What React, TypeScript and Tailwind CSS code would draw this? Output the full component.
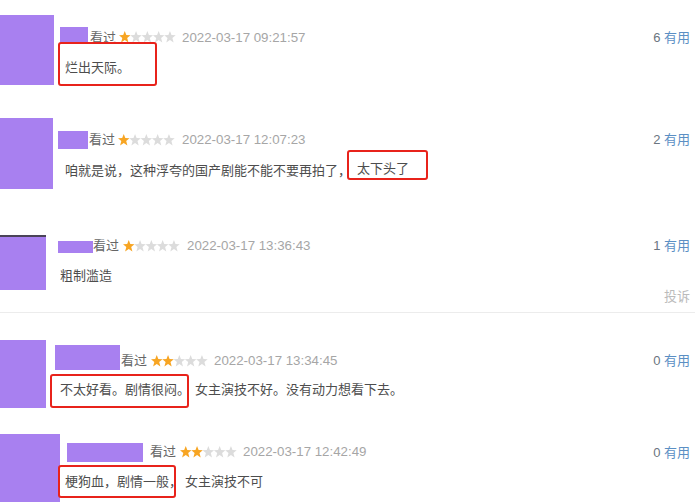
import React from "react";

const PURPLE = "bg-[#a880f0]";

function Stars({ n }: { n: number }) {
  const pts = "5.75,0 7.3,4.1 11.5,4.3 8.2,7 9.4,11.6 5.75,9.1 2.1,11.6 3.3,7 0,4.3 4.2,4.1";
  return (
    <svg width="57" height="12" viewBox="0 0 57 12" className="shrink-0">
      {[0, 1, 2, 3, 4].map((i) => (
        <polygon
          key={i}
          points={pts}
          transform={`translate(${i * 11.3},0)`}
          fill={i < n ? "#f7a523" : "#dcdcdc"}
        />
      ))}
    </svg>
  );
}

function Useful({ n, mt }: { n: number; mt: string }) {
  return (
    <div className={`ml-auto mr-[5px] leading-[18px] text-[13px] whitespace-nowrap ${mt}`}>
      <span className="text-[#6b7580]">{n}</span>
      <span className="text-[#5b8fc4]"> 有用</span>
    </div>
  );
}

export default function App() {
  return (
    <div
      className="w-[695px] h-[502px] overflow-hidden bg-white text-[13px] text-[#4d4d4d]"
      style={{ fontFamily: '"Liberation Sans", "Noto Sans CJK SC", sans-serif' }}
    >
      {/* Block 1 */}
      <div className="flex h-[110px]">
        <div className={`mt-[15px] w-[54px] h-[70px] shrink-0 ${PURPLE}`} />
        <div className="ml-[4px] mt-[27px] flex flex-col">
          <div className="flex items-start">
            <div className={`ml-[2px] w-[28px] h-[16px] ${PURPLE}`} />
            <span className="mt-[2px] leading-[18px] ml-[2px] text-[#666]">看过</span>
            <div className="mt-[4px] ml-[3px]"><Stars n={1} /></div>
            <span className="mt-[2px] ml-[6px] leading-[18px] text-[13.3px] text-[#a6a6a6]">2022-03-17 09:21:57</span>
          </div>
          <div className="-mt-[5px] w-[99px] h-[44px] border-2 border-[#e8231b] rounded-[3px] pt-[15px] pl-[5px] leading-[18px]">
            烂出天际。
          </div>
        </div>
        <Useful n={6} mt="mt-[29px]" />
      </div>

      {/* Block 2 */}
      <div className="flex h-[90px]">
        <div className={`mt-[8px] w-[53px] h-[71px] shrink-0 ${PURPLE}`} />
        <div className="ml-[5px] mt-[21px] flex flex-col">
          <div className="flex items-start">
            <div className={`w-[30px] h-[18px] ${PURPLE}`} />
            <span className="ml-[1px] leading-[18px] text-[#666]">看过</span>
            <div className="mt-[3px] ml-[3px]"><Stars n={1} /></div>
            <span className="ml-[7px] leading-[18px] text-[13.3px] text-[#a6a6a6]">2022-03-17 12:07:23</span>
          </div>
          <div className="mt-[1px] flex items-start whitespace-nowrap">
            <span className="pl-[7px] mt-[12px] leading-[18px]">咱就是说，这种浮夸的国产剧能不能不要再拍了，</span>
            <div className="-ml-[4px] w-[81px] h-[30px] border-2 border-[#e8231b] rounded-[3px] pt-[8px] pl-[8px] leading-[18px]">
              太下头了
            </div>
          </div>
        </div>
        <Useful n={2} mt="mt-[21px]" />
      </div>

      {/* Block 3 */}
      <div className="flex h-[113px] border-b border-[#ececec]">
        <div className={`mt-[35px] w-[46px] h-[55px] shrink-0 border-t-2 border-[#4a4358] ${PURPLE}`} />
        <div className="ml-[12px] mt-[37px] flex flex-col">
          <div className="flex items-start">
            <div className={`mt-[4px] w-[35px] h-[12px] ${PURPLE}`} />
            <span className="leading-[18px] text-[#666]">看过</span>
            <div className="mt-[3px] ml-[4px]"><Stars n={1} /></div>
            <span className="ml-[7px] leading-[18px] text-[13.3px] text-[#a6a6a6]">2022-03-17 13:36:43</span>
          </div>
          <div className="mt-[12px] pl-[2px] leading-[18px]">粗制滥造</div>
        </div>
        <div className="ml-auto mr-[5px] mt-[37px] flex flex-col items-end">
          <div className="leading-[18px] whitespace-nowrap">
            <span className="text-[#6b7580]">1</span>
            <span className="text-[#5b8fc4]"> 有用</span>
          </div>
          <div className="mt-[33px] leading-[18px] text-[#bbb]">投诉</div>
        </div>
      </div>

      {/* Block 4 */}
      <div className="flex h-[107px]">
        <div className={`mt-[27px] w-[46px] h-[68px] shrink-0 ${PURPLE}`} />
        <div className="ml-[9px] mt-[32px] flex flex-col">
          <div className="flex items-start">
            <div className={`w-[65px] h-[25px] ${PURPLE}`} />
            <span className="mt-[7px] ml-[1px] leading-[18px] text-[#666]">看过</span>
            <div className="mt-[10px] ml-[4px]"><Stars n={2} /></div>
            <span className="mt-[7px] ml-[6px] leading-[18px] text-[13.3px] text-[#a6a6a6]">2022-03-17 13:34:45</span>
          </div>
          <div className="mt-[4px] flex items-start whitespace-nowrap">
            <div className="-ml-[5px] w-[139px] h-[34px] shrink-0 border-2 border-[#e8231b] rounded-[3px] pt-[5px] pl-[8px] leading-[18px]">
              不太好看。剧情很闷。
            </div>
            <span className="ml-[6px] mt-[7px] leading-[18px]">女主演技不好。没有动力想看下去。</span>
          </div>
        </div>
        <Useful n={0} mt="mt-[39px]" />
      </div>

      {/* Block 5 */}
      <div className="flex h-[82px]">
        <div className={`mt-[14px] w-[60px] h-[68px] shrink-0 ${PURPLE}`} />
        <div className="ml-[7px] mt-[23px] flex flex-col">
          <div className="flex items-start">
            <div className={`w-[76px] h-[19px] ${PURPLE}`} />
            <span className="ml-[7px] leading-[18px] text-[#666]">看过</span>
            <div className="mt-[3px] ml-[4px]"><Stars n={2} /></div>
            <span className="ml-[6px] leading-[18px] text-[13.3px] text-[#a6a6a6]">2022-03-17 12:42:49</span>
          </div>
          <div className="mt-[3px] flex items-start whitespace-nowrap">
            <div className="-ml-[9px] w-[118px] h-[33px] shrink-0 border-2 border-[#e8231b] rounded-[3px] pt-[6px] pl-[5px] leading-[18px]">
              梗狗血，剧情一般，
            </div>
            <span className="ml-[9px] mt-[8px] leading-[18px]">女主演技不可</span>
          </div>
        </div>
        <Useful n={0} mt="mt-[24px]" />
      </div>
    </div>
  );
}
